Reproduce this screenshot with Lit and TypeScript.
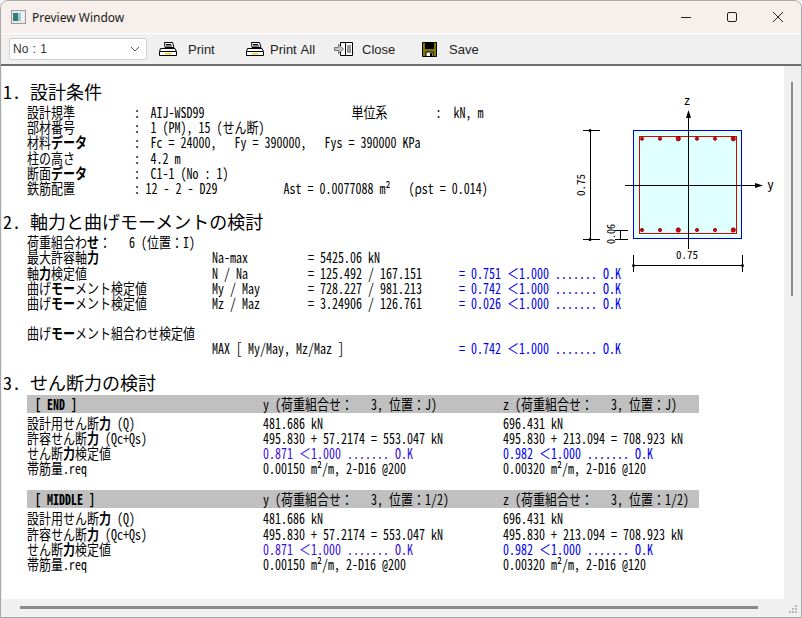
/**
 * Preview Window: a structural design report (column check) in a desktop dialog
 */

import { LitElement, html, css, svg } from 'lit';
import { customElement } from 'lit/decorators.js';

const TOOL_ITEMS = [
  { icon: 'printer', label: 'Print', width: 87, gap: 10 },
  { icon: 'printer', label: 'Print All', width: 88, gap: 5 },
  { icon: 'close', label: 'Close', width: 87, gap: 9 },
  { icon: 'save', label: 'Save', width: 70, gap: 9 },
];

const REBAR_X = [642, 660, 678.3, 697, 715, 733.3];
const BIG_BARS = [2, 5];

// hwid narrows every glyph, so full-width marks need it switched off
const COLON = html`<i>：</i>`;
const LESS = html`<i>＜</i>`;

@customElement('app-root')
export class AppRoot extends LitElement {
  static override styles = css`
    :host {
      display: block;
      width: 802px;
      height: 618px;
      overflow: hidden;
      background: #f0f0f0;
    }

    .window {
      position: relative;
      display: flex;
      flex-direction: column;
      height: 618px;
      box-sizing: border-box;
      border: 1px solid #a8a8a8;
      border-radius: 8px 8px 0 0;
      overflow: hidden;
    }

    .title {
      display: flex;
      align-items: center;
      height: 33px;
      flex: none;
      box-sizing: border-box;
      padding-left: 10px;
      background: #f7efeb;
      border-bottom: 1px solid #fff;
      font: 12px 'Noto Sans', sans-serif;
      color: #1a1a1a;
    }

    .title-text {
      margin-left: 6px;
    }

    .controls {
      display: flex;
      margin-left: auto;
    }

    .controls svg {
      display: block;
      width: 46px;
      height: 32px;
    }

    .toolbar {
      display: flex;
      align-items: center;
      height: 30px;
      flex: none;
      padding-left: 8px;
      background: #f0f0f0;
      font: 13px 'Liberation Sans', sans-serif;
      word-spacing: 1px;
      color: #222;
      white-space: pre;
    }

    .combo {
      display: flex;
      align-items: center;
      justify-content: space-between;
      width: 138px;
      height: 22px;
      box-sizing: border-box;
      padding: 0 6px 0 3px;
      margin-right: 11px;
      background: #fff;
      border: 1px solid #d0d0d0;
      border-radius: 2px;
      color: #333;
      font-size: 12px;
    }

    .tool {
      display: flex;
      align-items: center;
    }

    .tool svg {
      flex: none;
      width: 20px;
      height: 18px;
    }

    .body {
      display: flex;
      flex: 1;
      min-height: 0;
      border-top: 2px solid #6e6e6e;
    }

    .page {
      position: relative;
      flex: 1;
      margin: 0 0 18px 1px;
      background: #fff;
      overflow: hidden;
      color: #000;
      font-family: 'Noto Sans CJK JP', sans-serif;
      font-size: 12px;
      font-feature-settings: 'hwid';
    }

    .vbar {
      flex: none;
      position: relative;
      width: 17px;
      background: #f0f0f0;
    }

    .vthumb {
      position: absolute;
      left: 7px;
      top: 16px;
      width: 2px;
      height: 214px;
      background: #8a8a8a;
    }

    .hbar {
      position: absolute;
      left: 19px;
      bottom: 8px;
      width: 738px;
      height: 3px;
      background: #8a8a8a;
    }

    .grip {
      position: absolute;
      right: 3px;
      bottom: 3px;
      width: 9px;
      height: 9px;
    }

    h2 {
      margin: 0;
      height: 24px;
      line-height: 24px;
      padding-left: 1px;
      font-size: 18px;
      font-weight: 400;
      white-space: pre;
    }

    .sec1 {
      padding-top: 13px;
    }

    .sec2 {
      padding-top: 14px;
    }

    .sec3 {
      padding-top: 14px;
    }

    .rows {
      padding: 1px 0 0 25px;
    }

    .row {
      display: grid;
      height: 15.2px;
      line-height: 15.2px;
      transform: scaleY(1.22);
    }

    .row span {
      white-space: pre;
    }

    .row i {
      font-style: normal;
      font-feature-settings: normal;
    }

    .cond {
      grid-template-columns: 107px 16.5px 1fr;
    }

    .pull {
      margin-left: -3px;
    }

    .row .bar-value {
      margin-left: -5px;
    }

    .check {
      grid-template-columns: 185px 96px 151px 1fr;
    }

    .shear {
      grid-template-columns: 236px 240px 1fr;
    }

    .band {
      height: 18px;
      margin: 0 0 2px;
      padding-top: 1px;
      box-sizing: border-box;
      width: 672px;
      background: #c0c0c0;
    }

    .band .tag {
      padding-left: 8px;
      font-weight: 700;
    }

    .gap {
      height: 15px;
    }

    .blue {
      color: #0000f0;
    }

    .violet {
      color: #3a10e0;
    }

    b {
      font-weight: 700;
    }

    .diagram {
      position: absolute;
      left: -2px;
      top: -66px;
      width: 782px;
      height: 300px;
    }

    .diagram text {
      font-family: 'Noto Sans CJK JP', sans-serif;
      font-size: 11px;
      font-feature-settings: 'hwid';
    }
  `;

  private toolIcon(kind: string) {
    if (kind === 'close') {
      return html`<svg viewBox="0 0 20 18">
        <path d="M7.5 2.5h12v13h-12z" fill="#fff" stroke="#000" />
        <path d="M12.5 2.5v13" stroke="#000" />
        <path d="M14 6h4M14 8h4M14 10h4M14 12h4" stroke="#333" />
        <path d="M1.5 7.5h4v-3l5 4.5-5 4.5v-3h-4z" fill="#c4c4c4" stroke="#777" />
      </svg>`;
    }
    if (kind === 'save') {
      return html`<svg viewBox="0 0 20 18">
        <path d="M2.5 2.5h14v14h-14z" fill="#807800" stroke="#000" />
        <path d="M5 3h9v6H5z" fill="#000" />
        <path d="M6 12h7v4.5H6z" fill="#fff" stroke="#000" />
        <path d="M10 13h2v3h-2z" fill="#000" />
      </svg>`;
    }
    return html`<svg viewBox="0 0 20 18">
      <path d="M6.5 2.5h8l1.500 5h-9z" fill="#fff" stroke="#000" />
      <path d="M8 4.500h5M8 6h6" stroke="#000" />
      <path d="M2.500 8.500h14.500l1.500 3v4h-17v-4z" fill="#fff" stroke="#000" />
      <path d="M2 11.500h16" stroke="#000" />
      <path d="M7 13h6v1.500H7z" fill="#f0d800" />
    </svg>`;
  }

  private renderDiagram() {
    const bars = [138.7, 230].flatMap((y) =>
      REBAR_X.map(
        (x, i) => svg`<circle cx=${x} cy=${y} r=${BIG_BARS.includes(i) ? 2.2 : 1.7} fill="#e00000" stroke="#400" stroke-width="0.6" />`
      )
    );
    return html`<svg class="diagram" viewBox="0 0 782 300">
      <rect x="633.500" y="130.500" width="108" height="108" fill="#e0ffff" stroke="#0000d0" />
      <rect x="639.500" y="136.500" width="97" height="97" fill="none" stroke="#e00000" />
      ${bars}
      <g stroke="#000" fill="none">
        <path d="M688.500 112V249M625 185.500H762" />
        <path d="M583 130.500h17M583 239.500h17M590.500 130.500v109" />
        <path d="M615 230.500h13M615 239.500h13M620.500 230.500v9" />
        <path d="M633.500 255v17M742.500 255v17M633.500 265.500h109" />
      </g>
      <path d="M688.500 110l-2.500 8h5zM763 185.500l-8-2.500v5z" fill="#000" />
      <g fill="#000">
        <circle cx="590" cy="130.500" r="1.500" />
        <circle cx="590" cy="239.500" r="1.500" />
        <circle cx="633.500" cy="265.500" r="1.500" />
        <circle cx="742.500" cy="265.500" r="1.500" />
      </g>
      <text x="687" y="105" text-anchor="middle" style="font-size:13px">z</text>
      <text x="770.500" y="189" text-anchor="middle" style="font-size:13px">y</text>
      <text x="687" y="259" text-anchor="middle">0.75</text>
      <text transform="translate(585 185) rotate(-90)" text-anchor="middle">0.75</text>
      <text transform="translate(615 234) rotate(-90)" text-anchor="middle" style="font-size:10px">0.06</text>
    </svg>`;
  }

  private renderShear(tag: string, pos: string) {
    return html`
      <div class="band">
        <div class="row shear">
          <span class="tag">[ ${tag} ]</span>
          <span>y (荷重組合せ${COLON}   3, 位置${COLON}${pos})</span>
          <span>z (荷重組合せ${COLON}   3, 位置${COLON}${pos})</span>
        </div>
      </div>
      <div class="row shear"><span>設計用せん断<b>力</b> (Q)</span><span>481.686 kN</span><span>696.431 kN</span></div>
      <div class="row shear">
        <span>許容せん断<b>力</b> (Qc+Qs)</span>
        <span>495.830 + 57.2174 = 553.047 kN</span>
        <span>495.830 + 213.094 = 708.923 kN</span>
      </div>
      <div class="row shear">
        <span>せん断<b>力</b>検定値</span>
        <span class="violet">0.871 ${LESS}1.000 ....... O.K</span>
        <span class="blue">0.982 ${LESS}1.000 ....... O.K</span>
      </div>
      <div class="row shear">
        <span>帯筋量.req</span>
        <span>0.00150 m²/m, 2-D16 @200</span>
        <span>0.00320 m²/m, 2-D16 @120</span>
      </div>
    `;
  }

  override render() {
    return html`
      <div class="window">
        <div class="title">
          <svg width="15" height="14" viewBox="0 0 15 14">
            <rect x="0.500" y="0.500" width="14" height="13" fill="#e8e8e8" stroke="#9a9a9a" />
            <rect x="2" y="3" width="5" height="8" fill="#2f7f7a" />
            <rect x="7" y="3" width="3" height="8" fill="#9cc8d8" />
            <rect x="10" y="3" width="3" height="8" fill="#f4f4f4" />
          </svg>
          <span class="title-text">Preview Window</span>
          <div class="controls">
            <svg viewBox="0 0 46 32"><path d="M18 16.500h10" stroke="#222" /></svg>
            <svg viewBox="0 0 46 32"><rect x="18.500" y="11.500" width="9" height="9" rx="1.500" fill="none" stroke="#222" /></svg>
            <svg viewBox="0 0 46 32"><path d="M18 11l10 10M28 11L18 21" stroke="#222" /></svg>
          </div>
        </div>

        <div class="toolbar">
          <div class="combo">
            <span>No : 1</span>
            <svg width="10" height="6" viewBox="0 0 10 6"><path d="M1 1l4 4 4-4" fill="none" stroke="#555" /></svg>
          </div>
          ${TOOL_ITEMS.map(
            (item) => html`<div class="tool" style="width:${item.width}px; gap:${item.gap}px">${this.toolIcon(item.icon)}<span>${item.label}</span></div>`
          )}
        </div>

        <div class="body">
          <div class="page">
            ${this.renderDiagram()}

            <section class="sec1">
              <h2>1. 設計条件</h2>
              <div class="rows">
                <div class="row cond"><span>設計規準</span><span>:</span><span>AIJ-WSD99                         <span class="pull">単位系</span>        :  kN, m</span></div>
                <div class="row cond"><span>部材番号</span><span>:</span><span>1 (PM), 15 (せん断)</span></div>
                <div class="row cond"><span>材料<b>データ</b></span><span>:</span><span>Fc = 24000,   Fy = 390000,   Fys = 390000 KPa</span></div>
                <div class="row cond"><span>柱の高さ</span><span>:</span><span>4.2 m</span></div>
                <div class="row cond"><span>断面<b>データ</b></span><span>:</span><span>C1-1 (No : 1)</span></div>
                <div class="row cond"><span>鉄筋配置</span><span>:</span><span class="bar-value">12 - 2 - D29           Ast = 0.0077088 m²   (<i>ρ</i>st = 0.014)</span></div>
              </div>
            </section>

            <section class="sec2">
              <h2>2. 軸力と曲げモーメントの検討</h2>
              <div class="rows">
                <div class="row check"><span>荷重組合わ<b>せ</b>${COLON}   6 (位置${COLON}I)</span></div>
                <div class="row check"><span>最大許容軸<b>力</b></span><span>Na-max</span><span>= 5425.06 kN</span></div>
                <div class="row check"><span>軸<b>力</b>検定値</span><span>N / Na</span><span>= 125.492 / 167.151</span><span class="blue">= 0.751 ${LESS}1.000 ....... O.K</span></div>
                <div class="row check"><span>曲げ<b>モー</b>メント検定値</span><span>My / May</span><span>= 728.227 / 981.213</span><span class="blue">= 0.742 ${LESS}1.000 ....... O.K</span></div>
                <div class="row check"><span>曲げ<b>モー</b>メント検定値</span><span>Mz / Maz</span><span>= 3.24906 / 126.761</span><span class="blue">= 0.026 ${LESS}1.000 ....... O.K</span></div>
                <div class="row check"></div>
                <div class="row check"><span>曲げ<b>モー</b>メント組合わせ検定値</span></div>
                <div class="row check"><span></span><span>MAX [ My/May, Mz/Maz ]</span><span></span><span class="blue">= 0.742 ${LESS}1.000 ....... O.K</span></div>
              </div>
            </section>

            <section class="sec3">
              <h2>3. せん断力の検討</h2>
              <div class="rows">
                ${this.renderShear('END', 'J')}
                <div class="gap"></div>
                ${this.renderShear('MIDDLE', '1/2')}
              </div>
            </section>
          </div>
          <div class="vbar"><div class="vthumb"></div></div>
        </div>

        <div class="hbar"></div>
        <svg class="grip" viewBox="0 0 9 9" fill="#b8b8b8">
          <path d="M6 0h2v2H6zM3 3h2v2H3zM6 3h2v2H6zM0 6h2v2H0zM3 6h2v2H3zM6 6h2v2H6z" />
        </svg>
      </div>
    `;
  }
}

declare global {
  interface HTMLElementTagNameMap {
    'app-root': AppRoot;
  }
}
